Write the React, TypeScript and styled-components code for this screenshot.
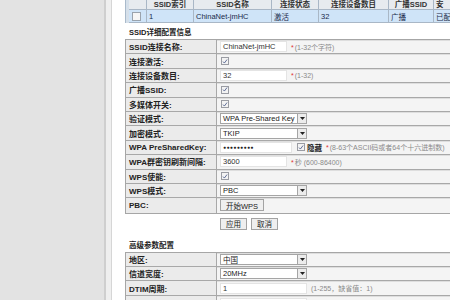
import React from "react";
import styled, { createGlobalStyle } from "styled-components";

const GlobalStyle = createGlobalStyle`
	html, body {
		margin: 0;
		padding: 0;
		background: #ffffff;
	}
	body {
		font-family: "Liberation Sans", "Noto Sans CJK SC", sans-serif;
		font-size: 7.5px;
		color: #222;
	}
`;

type Field = {
	label: string;
	kind: "text" | "check" | "select" | "password" | "button";
	value?: string;
	hint?: string;
	star?: boolean;
	width?: number;
};

const ssidFields: Field[] = [
	{ label: "SSID连接名称:", kind: "text", value: "ChinaNet-jmHC", star: true, hint: "(1-32个字符)" },
	{ label: "连接激活:", kind: "check" },
	{ label: "连接设备数目:", kind: "text", value: "32", star: true, hint: "(1-32)" },
	{ label: "广播SSID:", kind: "check" },
	{ label: "多媒体开关:", kind: "check" },
	{ label: "验证模式:", kind: "select", value: "WPA Pre-Shared Key" },
	{ label: "加密模式:", kind: "select", value: "TKIP" },
	{ label: "WPA PreSharedKey:", kind: "password", value: "●●●●●●●●●", width: 72, star: true, hint: "(8-63个ASCII码或者64个十六进制数)" },
	{ label: "WPA群密钥刷新间隔:", kind: "text", value: "3600", star: true, hint: "秒 (600-86400)" },
	{ label: "WPS使能:", kind: "check" },
	{ label: "WPS模式:", kind: "select", value: "PBC" },
	{ label: "PBC:", kind: "button", value: "开始WPS" },
];

const advancedFields: Field[] = [
	{ label: "地区:", kind: "select", value: "中国" },
	{ label: "信道宽度:", kind: "select", value: "20MHz" },
	{ label: "DTIM周期:", kind: "text", value: "1", width: 87, hint: "(1-255，缺省值：1)" },
	{ label: "", kind: "text", value: "", width: 87 },
];

const ssidColumns = [
	{ title: "", width: 18 },
	{ title: "SSID索引", width: 47 },
	{ title: "SSID名称", width: 78 },
	{ title: "连接状态", width: 47 },
	{ title: "连接设备数目", width: 70 },
	{ title: "广播SSID", width: 45 },
	{ title: "安", width: 60, left: true },
];

const ssidRow = ["", "1", "ChinaNet-jmHC", "激活", "32", "广播", "已配"];

function CheckMark() {
	return (
		<CheckBox>
			<svg width="7" height="7" viewBox="0 0 7 7">
				<path d="M1.2 3.6 L2.8 5.3 L5.9 1.2" fill="none" stroke="#4a5a8a" strokeWidth="1" />
			</svg>
		</CheckBox>
	);
}

function FieldValue({ field }: { field: Field }) {
	const hint = field.hint || field.star ? (
		<Hint>
			{field.star && <Star>*</Star>}
			{field.hint}
		</Hint>
	) : null;

	switch (field.kind) {
		case "check":
			return <CheckMark />;
		case "select":
			return (
				<Select>
					<span>{field.value}</span>
					<Arrow>
						<svg width="5" height="3" viewBox="0 0 5 3">
							<path d="M0 0 L5 0 L2.5 3 Z" fill="#222" />
						</svg>
					</Arrow>
				</Select>
			);
		case "button":
			return <PlainButton>{field.value}</PlainButton>;
		case "password":
			return (
				<>
					<TextBox $width={field.width ?? 72}>
						<Dots>{field.value}</Dots>
					</TextBox>
					<CheckMark />
					<HideLabel>隐藏</HideLabel>
					{hint}
				</>
			);
		default:
			return (
				<>
					<TextBox $width={field.width ?? 67}>{field.value}</TextBox>
					{hint}
				</>
			);
	}
}

function FieldTable({ fields }: { fields: Field[] }) {
	return (
		<Fields>
			{fields.map((f, i) => (
				<FieldRow key={`${f.label}-${i}`}>
					<Label>{f.label}</Label>
					<Value>
						<FieldValue field={f} />
					</Value>
				</FieldRow>
			))}
		</Fields>
	);
}

export default function App() {
	return (
		<>
			<GlobalStyle />
			<Page>
				<Sidebar />
				<Gutter />
				<Main>
					<SsidTable>
						<HeadRow>
							{ssidColumns.map((c, i) => (
								<HeadCell key={i} $width={c.width} $left={c.left}>
									{c.title}
								</HeadCell>
							))}
						</HeadRow>
						<DataRow>
							{ssidRow.map((v, i) => (
								<DataCell key={i} $width={ssidColumns[i].width}>
									{i === 0 ? <SmallBox /> : v}
								</DataCell>
							))}
						</DataRow>
					</SsidTable>

					<SectionTitle $top={4}>SSID详细配置信息</SectionTitle>
					<FieldTable fields={ssidFields} />

					<Actions>
						<PlainButton>应用</PlainButton>
						<PlainButton>取消</PlainButton>
					</Actions>

					<SectionTitle $top={9}>高级参数配置</SectionTitle>
					<FieldTable fields={advancedFields} />
				</Main>
			</Page>
		</>
	);
}

const Page = styled.div`
	display: flex;
	width: 450px;
	height: 300px;
	overflow: hidden;
`;

const Sidebar = styled.div`
	width: 104px;
	flex: none;
	background: #e3e3e3;
	border-right: 2px solid #cfcfcf;
`;

const Gutter = styled.div`
	width: 5px;
	flex: none;
	background: #efefef;
	border-right: 1px solid #d6d6d6;
`;

const Main = styled.div`
	flex: 1;
	min-width: 0;
	padding-left: 13px;
	overflow: hidden;
`;

const SsidTable = styled.div`
	display: grid;
	width: max-content;
	border: 1px solid #a9bacb;
	border-top: none;
	border-bottom: none;
	padding-left: 3px;
	background: #d6e0ea;
`;

const HeadRow = styled.div`
	display: flex;
	height: 10px;
	background: #e7ebef;
`;

const HeadCell = styled.div<{ $width: number; $left?: boolean }>`
	width: ${(p) => p.$width}px;
	box-sizing: border-box;
	border-right: 1px solid #a9b7c6;
	border-bottom: 1px solid #a9b7c6;
	font-weight: bold;
	color: #333;
	text-align: ${(p) => (p.$left ? "left" : "center")};
	padding-left: ${(p) => (p.$left ? 2 : 0)}px;
	line-height: 9px;
	white-space: nowrap;
	overflow: hidden;
`;

const DataRow = styled.div`
	display: flex;
	height: 12px;
	background: #cfe4f8;
	border-bottom: 1px solid #a9b7c6;
`;

const DataCell = styled.div<{ $width: number }>`
	width: ${(p) => p.$width}px;
	box-sizing: border-box;
	border-right: 1px solid #a9b7c6;
	padding-left: 2px;
	display: flex;
	align-items: center;
	white-space: nowrap;
	overflow: hidden;
	color: #1a2a4a;
`;

const SmallBox = styled.span`
	width: 7px;
	height: 7px;
	border: 1px solid #9aa3ad;
	background: #f6f6f6;
	margin-left: 1px;
`;

const SectionTitle = styled.div<{ $top: number }>`
	margin: ${(p) => p.$top}px 0 0 4px;
	height: 12px;
	line-height: 12px;
	font-weight: bold;
	color: #222;
`;

const Fields = styled.div`
	border: 1px solid #a6a6a6;
	border-right: none;
	background: #f4f4f4;
`;

const FieldRow = styled.div`
	display: grid;
	grid-template-columns: 91px 1fr;
	height: 14.4px;
	box-sizing: border-box;
	border-bottom: 1px solid #a8a8a8;
	box-shadow: inset 0 1px 0 #dedede;
	&:last-child {
		border-bottom: none;
	}
`;

const Label = styled.div`
	display: flex;
	align-items: center;
	padding-left: 3px;
	background: #ebebeb;
	border-right: 1px solid #a8a8a8;
	font-size: 8px;
	font-weight: bold;
	color: #222;
	white-space: nowrap;
`;

const Value = styled.div`
	display: flex;
	align-items: center;
	gap: 4px;
	padding-left: 3px;
	white-space: nowrap;
	color: #333;
	min-width: 0;
`;

const TextBox = styled.div<{ $width: number }>`
	flex: none;
	width: ${(p) => p.$width}px;
	height: 11px;
	box-sizing: border-box;
	background: #ffffff;
	border: 1px solid #e4e4e4;
	padding-left: 2px;
	display: flex;
	align-items: center;
	color: #333;
`;

const Dots = styled.span`
	font-size: 5px;
	letter-spacing: 0.4px;
	color: #222;
`;

const CheckBox = styled.span`
	flex: none;
	width: 8px;
	height: 8px;
	box-sizing: border-box;
	border: 1px solid #9a9ca3;
	background: #f3f3f3;
	display: flex;
	align-items: center;
	justify-content: center;
	margin-left: 1px;
`;

const HideLabel = styled.span`
	flex: none;
	font-weight: bold;
	margin-left: -2px;
	color: #222;
`;

const Hint = styled.span`
	font-size: 7px;
	color: #8a8a8a;
`;

const Star = styled.span`
	color: #e03030;
	margin-right: 1px;
`;

const Select = styled.div`
	flex: none;
	width: 87px;
	height: 11px;
	box-sizing: border-box;
	background: #ffffff;
	border: 1px solid #a5a5a5;
	display: flex;
	align-items: center;
	justify-content: space-between;
	padding-left: 2px;
	color: #222;
`;

const Arrow = styled.span`
	width: 9px;
	height: 9px;
	box-sizing: border-box;
	border-left: 1px solid #a5a5a5;
	background: #ececec;
	display: flex;
	align-items: center;
	justify-content: center;
`;

const PlainButton = styled.div`
	flex: none;
	height: 12px;
	padding: 0 5px;
	box-sizing: border-box;
	border: 1px solid #a3a3a3;
	background: #efefef;
	display: flex;
	align-items: center;
	color: #222;
	white-space: nowrap;
`;

const Actions = styled.div`
	display: flex;
	gap: 4px;
	height: 14px;
	align-items: center;
	margin-top: 3px;
	padding-left: 95px;
`;
